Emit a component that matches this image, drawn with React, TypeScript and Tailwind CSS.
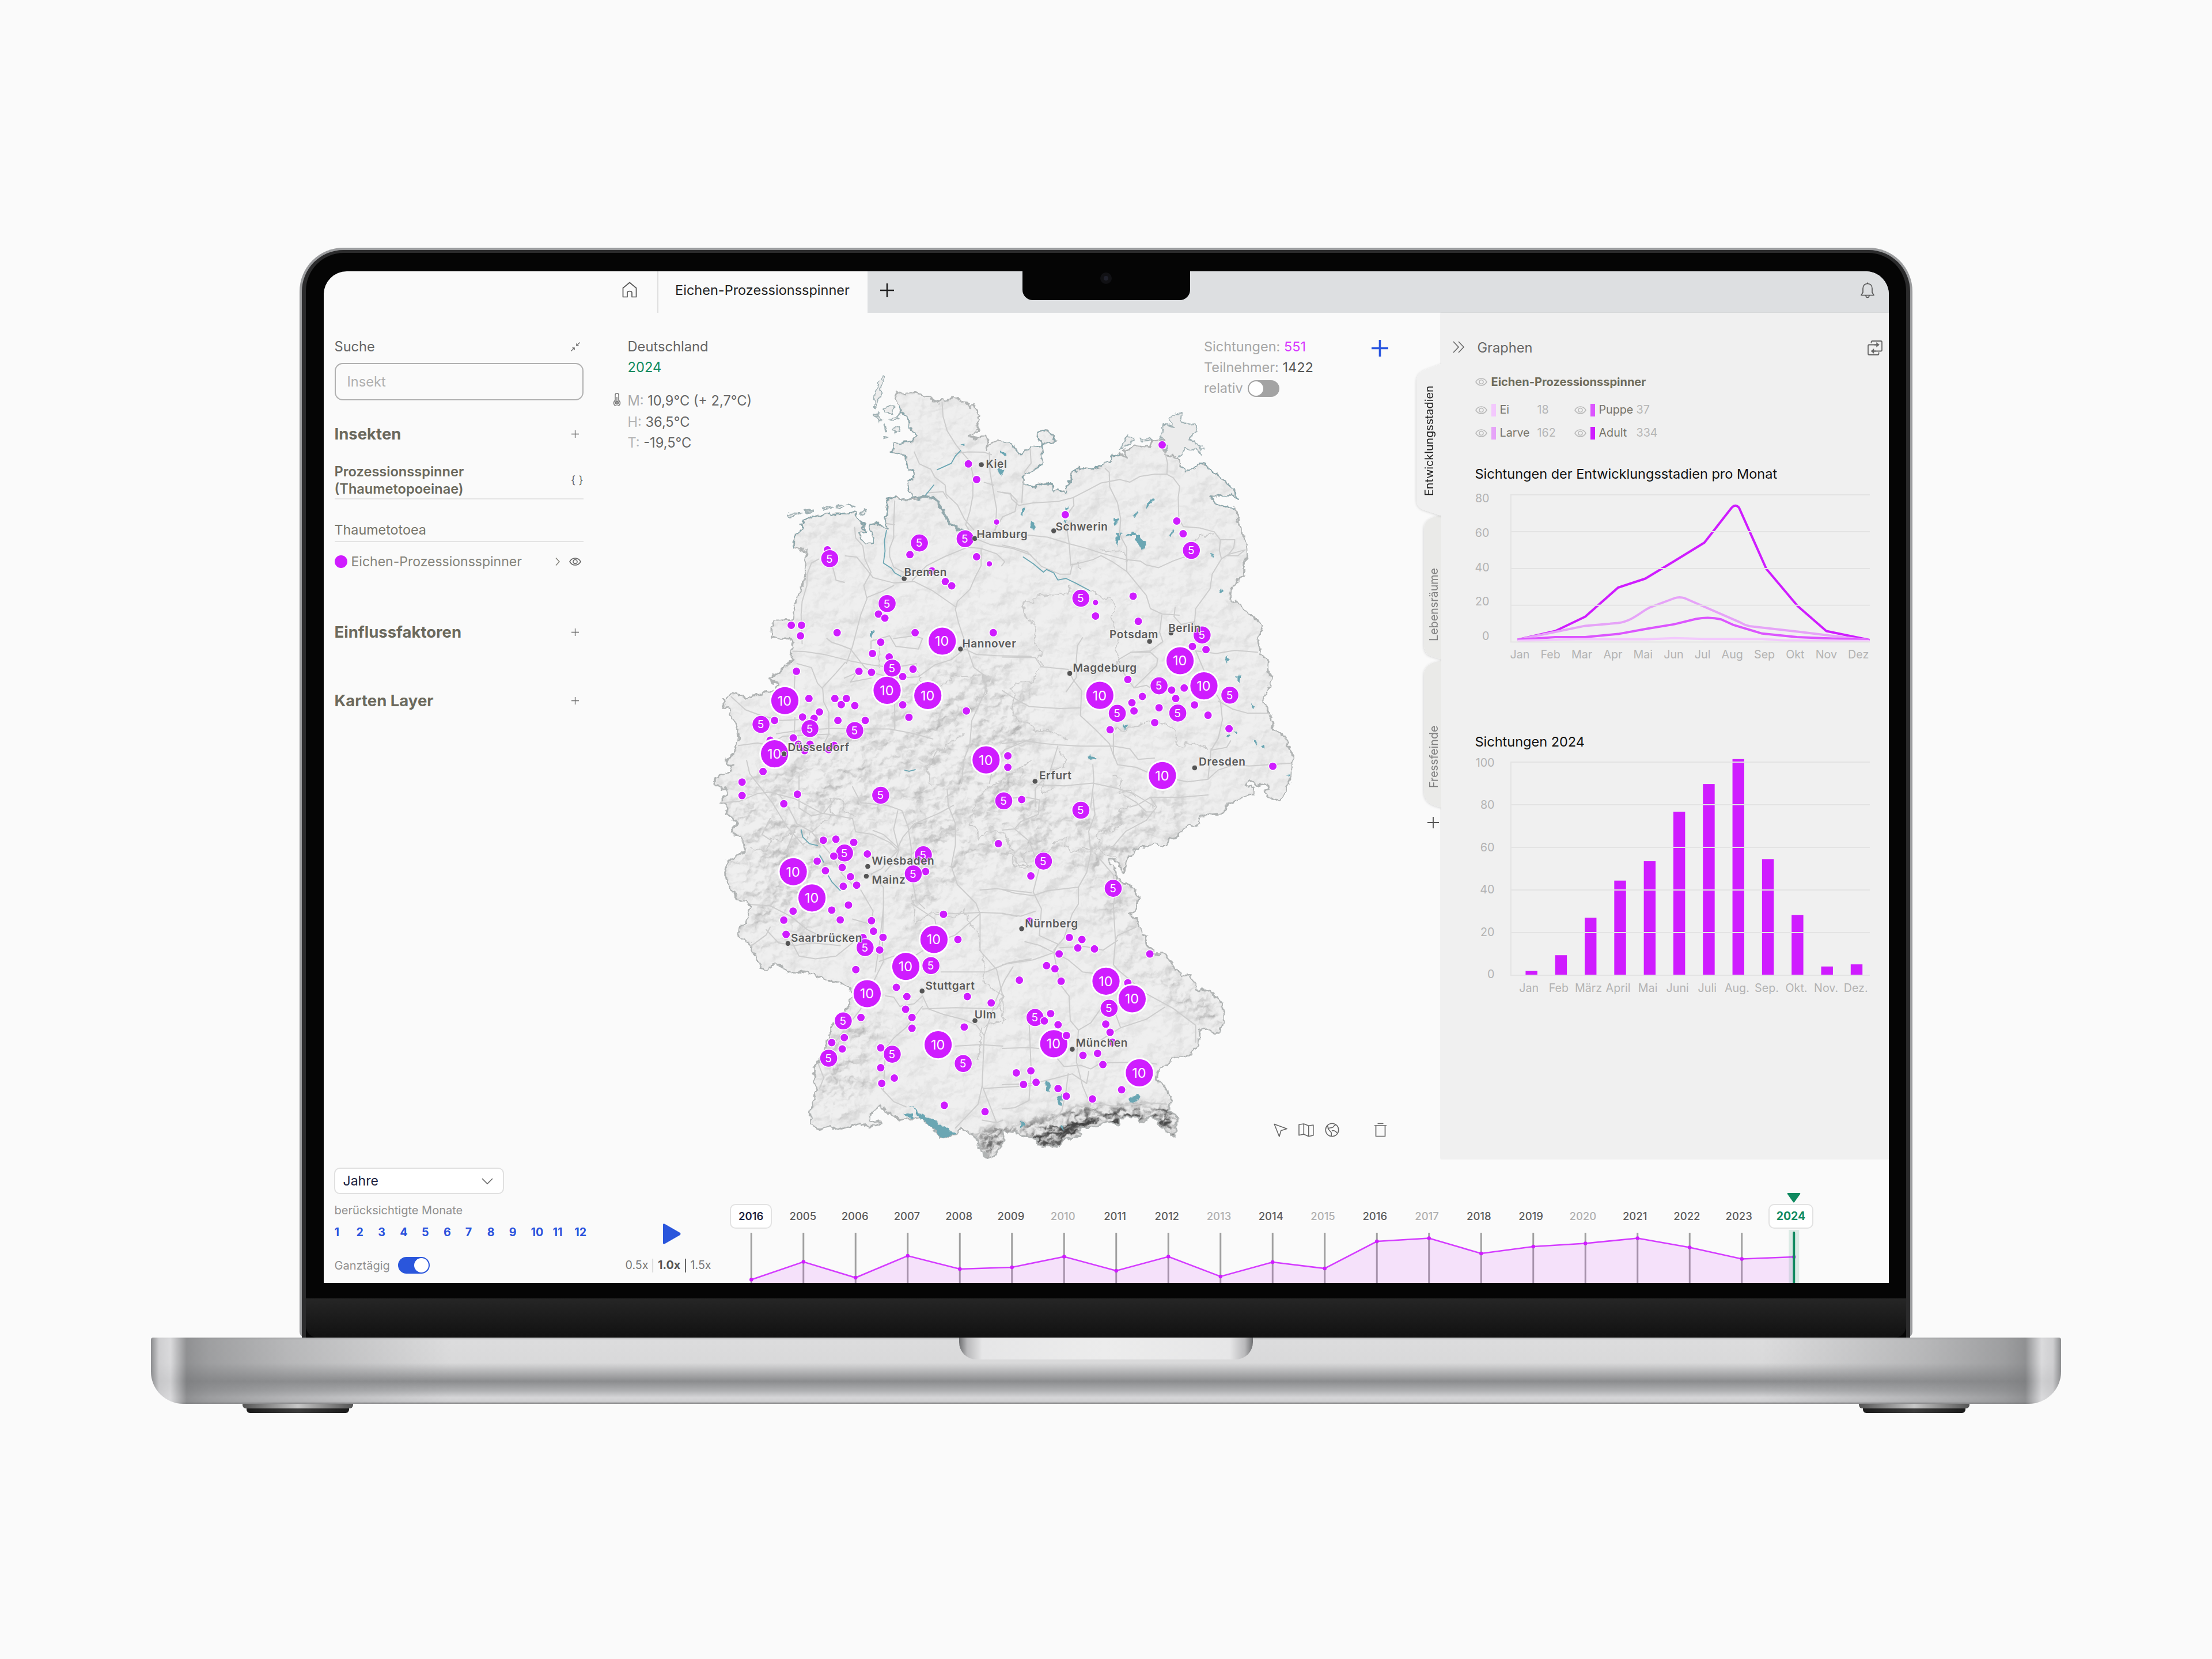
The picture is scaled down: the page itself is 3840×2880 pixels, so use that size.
import React from 'react';

type Sheet = 'A' | 'B' | 'C' | 'D';
type Pt = [number, number];

// The map is digitised on four sheets (NW, NE, SE, SW). Each has its own origin and unit size.
const SHEETS: Record<Sheet, { x: number; y: number; kx: number; ky: number }> = {
    A: { x: 1230, y: 640, kx: 0.35714, ky: 0.45918 },
    B: { x: 1740, y: 680, kx: 0.35714, ky: 0.45918 },
    C: { x: 1740, y: 1380, kx: 0.35714, ky: 0.42092 },
    D: { x: 1230, y: 1320, kx: 0.35714, ky: 0.45918 },
};

const at = (s: Sheet, x: number, y: number): Pt => {
    const t = SHEETS[s];
    return [Math.round((t.x + x * t.kx) * 10) / 10, Math.round((t.y + y * t.ky) * 10) / 10];
};

const pts = (s: Sheet, list: string): Pt[] =>
    list.trim().split(/\s+/).map((p) => {
        const [x, y] = p.split(',').map(Number);
        return at(s, x, y);
    });

const line = (s: Sheet, list: string) => 'M' + pts(s, list).map((p) => p.join(',')).join('L');
const area = (s: Sheet, list: string) => line(s, list) + 'Z';

const OUTLINE: [Sheet, string][] = [
    ['A', '905,95 915,86 950,92 1010,90 1060,104 1085,108 1088,124 1118,126 1135,114 1142,126 1170,118 1188,106 1225,120 1252,126 1272,146 1290,135 1318,178 1305,190 1315,235 1262,258 1300,262 1350,252 1362,262 1350,300 1372,284 1405,268'],
    ['B', '0,190 40,200 80,232 100,230 145,208 185,205 205,200 170,180 172,150 215,145 240,158 260,186 208,200 190,215 196,270 150,298 100,320 105,348 138,350 145,362 210,342 240,352 248,375 275,368 305,384 312,360 345,305 370,290 430,292 500,276 540,242 570,235 605,250 590,225 640,200 720,208 725,188 780,178 790,235 860,248 870,282 895,305 955,275 985,275 1000,290 1060,325 1125,370 1150,408 1125,395 1110,390 1010,400 1050,430 1135,438 1145,490 1180,560 1192,622 1175,640 1175,695 1112,740 1108,790 1150,800 1205,845 1265,885 1240,945 1255,995 1295,1015 1290,1060 1310,1075 1300,1110 1265,1170 1320,1250 1310,1275 1385,1310 1390,1345 1413,1375 1400,1460 1350,1550 1285,1530 1280,1515 1298,1500 1290,1485 1255,1490 1220,1478 1190,1475 1182,1490 1222,1495 1222,1520 1150,1540'],
    ['C', '1085,47 1072,75 1020,80 965,92 960,110 942,130 912,120 870,145 860,172 808,180 800,205 785,215 742,202 645,225 600,275 595,318 580,315 575,290 545,265 522,262 525,285 555,320 555,345 640,380 663,425 640,485 620,490 665,530 680,575 695,580 700,615 745,655 795,655 820,690 870,740 910,745 942,790 945,805 1010,805 1025,830 1048,838 1075,870 1080,940 1050,985 980,960 958,970 955,1030 910,1075 830,1090 770,1130 745,1170 790,1205 825,1260 805,1300 850,1325 855,1350 840,1370 840,1410 800,1390 755,1355 760,1340 720,1325 685,1350 640,1330 565,1330 570,1360 500,1350 440,1370 380,1370 375,1405 310,1420 265,1448 175,1448 165,1415 140,1410 75,1395 10,1385'],
    ['D', '1428,1400 1440,1440 1415,1465 1380,1500 1350,1505 1340,1480 1315,1468 1318,1440 1280,1410 1225,1390 1205,1415 1125,1425 1085,1385 1030,1350 975,1355 930,1360 880,1335 860,1330 840,1308 800,1325 778,1345 785,1365 840,1360 830,1375 800,1385 770,1385 740,1370 690,1385 650,1390 620,1395 590,1385 540,1395 500,1370 490,1340 510,1300 525,1235 510,1205 515,1165 545,1130 570,1080 600,1000 640,970 665,945 700,890 690,860 640,840 560,830 500,805 465,795 430,805 385,800 360,780 320,770 285,790 255,785 245,755 210,715 200,690 145,665 150,635 190,600 205,545 140,520 110,490 85,460 82,420 95,380 160,350 180,340 160,290 115,275 140,235 88,200 85,165 52,160 90,130 85,110 30,90'],
    ['A', '28,1546 90,1530 125,1500 95,1500 90,1485 130,1440 145,1400 140,1350 105,1305 110,1285 75,1280 68,1250 115,1225 140,1232 190,1245 240,1232 330,1215 335,1198 295,1170 350,1145 410,1100 400,1070 412,1035 395,1020 350,1022 305,1010 305,980 318,950 412,948 428,870 470,790 465,750 480,690 415,680 418,640 455,605 445,590 480,565 550,550 640,548 718,543 722,570 755,590 760,620 730,625 735,640 770,660 800,655 800,620 780,610 785,590 815,585 870,610 860,560 875,490 915,478 930,495 960,498 1010,490 975,465 965,425 1000,415 998,390 970,385 960,350 960,330 890,315 900,285 985,275 1015,255 1010,240 975,225 980,205 940,165 930,140'],
];
const GERMANY = 'M' + OUTLINE.flatMap(([s, l]) => pts(s, l)).map((p) => p.join(',')).join('L') + 'Z';

const ISLANDS = [
    area('A', '848,28 860,32 835,70 835,95 815,145 806,142 812,85 830,50'),
    area('A', '848,155 875,142 900,150 892,168 860,168'),
    area('A', '808,175 825,165 818,180 842,192 825,198'),
    area('A', '875,188 930,180 940,160 920,192 885,195'),
    area('A', '853,212 865,240 858,240'),
    area('A', '892,232 915,218 932,222 925,240 905,245'),
    area('A', '852,258 866,264 856,268'),
    area('A', '380,555 385,548 450,549 440,554 392,560'),
    area('A', '462,540 512,534 515,540 465,544'),
    area('A', '555,530 575,522 605,522 570,534'),
    area('A', '615,520 650,514 655,522 620,524'),
    area('A', '670,516 690,514 712,522'),
    area('A', '742,545 752,536 768,540 755,550'),
    area('B', '780,180 775,165 785,118 795,125 830,130 815,100 835,88 872,80 865,112 895,122 940,120 945,135 935,155 905,178 935,190 972,212 965,235 945,215 920,222 890,212 870,240 850,250 800,238 785,228 800,200'),
    area('B', '570,222 612,162 640,182 605,205'),
    area('B', '668,178 725,176 730,184 680,186'),
    area('B', '985,300 1000,292 1040,322 1062,345 1050,358 1020,340 990,332'),
];

const LAKES = [
    area('B', '640,545 665,540 702,572 680,598 650,572'),
    area('B', '595,540 645,530 652,540 600,545'),
    area('B', '550,540 575,532 572,560 560,582 550,560'),
    area('B', '700,430 722,405 736,408 712,436'),
    area('B', '635,472 650,455 662,458 645,475'),
    area('B', '810,545 835,520 838,526 822,550'),
    area('B', '545,478 565,476 552,505 542,500'),
    area('B', '1016,608 1028,610 1024,632 1016,625'),
    area('B', '1058,742 1078,755 1062,760'),
    area('B', '1092,998 1102,1012 1086,1032'),
    area('B', '1138,1075 1156,1075 1148,1098 1138,1094'),
    area('B', '1204,1178 1224,1188 1222,1200 1206,1190'),
    area('B', '585,1260 608,1266 604,1275 588,1272'),
    area('B', '424,1374 458,1382 456,1390 428,1386'),
    area('B', '1086,1298 1112,1296 1108,1303 1088,1308'),
    area('B', '1125,1280 1146,1288 1138,1298'),
    area('B', '1216,1315 1242,1326 1234,1333'),
    area('B', '1250,1342 1272,1338 1266,1350'),
    area('B', '1380,1446 1396,1444 1386,1456'),
    area('B', '92,440 104,438 104,468 94,462'),
    area('B', '132,490 156,494 152,524 142,512'),
    area('B', '302,440 326,432 318,444'),
    area('B', '295,492 320,486 314,500'),
    area('B', '0,228 24,234 18,240 0,240'),
    area('A', '1400,385 1435,378 1425,405 1410,392'),
    area('A', '1416,315 1452,318 1445,328 1420,324'),
    area('A', '1225,286 1246,284 1238,292'),
    area('A', '788,998 806,998 796,1016'),
    area('D', '978,1303 1040,1340 1095,1358 1140,1385 1207,1414 1125,1426 1085,1385 1030,1352'),
    area('D', '950,1332 980,1336 1008,1352 965,1348'),
    area('D', '1518,1366 1534,1378 1518,1392'),
    area('C', '215,1178 224,1180 235,1215 225,1232 212,1222'),
    area('C', '270,1245 290,1232 290,1280 276,1280'),
    area('C', '613,1248 635,1248 655,1230 674,1250 645,1268 622,1272'),
    area('C', '92,1348 106,1360 90,1376'),
    area('C', '278,1370 292,1362 306,1378'),
];

const RIVERS = [
    line('A', '1112,382 1180,358 1200,330 1225,310'),
    line('A', '1055,478 1095,440'),
    line('A', '865,612 855,650 858,690 850,735 890,755 905,772 935,785'),
    line('B', '102,625 150,650 200,682 215,672 250,685 270,712 310,706 360,725 425,752'),
    line('D', '450,262 458,290 490,315 530,322'),
    line('D', '540,358 560,385'),
    line('D', '582,436 600,460 625,480 640,492'),
    line('A', '953,1518 975,1522 1005,1516'),
];

const ESTUARY = line('A', '930,495 960,498 1010,487 1060,484 1095,488 1120,515 1150,550 1175,585 1205,605 1235,612');

const ROADS = [
    line('A', '1135,126 1140,180 1160,235 1200,285 1230,315 1270,350 1285,400 1285,480 1270,540 1250,590 1290,640'),
    line('A', '1200,320 1260,315 1340,316 1375,325'),
    line('A', '1000,315 1025,360 1080,380 1100,410 1150,440 1155,475 1210,515 1245,570 1290,610'),
    line('A', '1365,316 1368,390 1385,465 1400,530 1395,610 1310,640'),
    line('A', '1340,430 1385,440'),
    line('A', '1405,465 1470,475 1500,500 1490,540 1430,560 1390,610'),
    line('A', '1060,470 1140,465 1160,490'),
    line('A', '990,800 1060,745 1150,710 1260,675 1330,680'),
    line('A', '1325,680 1325,745 1295,790 1270,835 1210,880 1200,910 1215,960 1245,1030 1290,1130 1350,1165'),
    line('A', '1325,680 1400,700 1440,730 1425,745'),
    line('A', '1290,640 1370,665 1480,680 1568,705'),
    line('A', '665,708 720,712 770,760 800,790 900,810 1000,805 1090,840 1200,900'),
    line('A', '710,600 715,640 750,670 760,720 790,770 755,820 770,870 740,930 700,1050 670,1115'),
    line('A', '535,720 500,735 480,775 478,820 455,880 450,930 455,1040'),
    line('A', '905,500 900,590 900,640 880,680 880,710 900,750 950,770'),
    line('A', '590,710 610,770 620,800 660,808'),
    line('A', '860,585 905,590'),
    line('A', '770,865 850,840 900,820'),
    line('A', '410,1068 470,1070 560,1080 690,1105 790,1120 900,1130 1010,1115'),
    line('A', '690,1060 730,1100 760,1130 800,1150 900,1170 1020,1165 1100,1120 1180,1100 1245,1060'),
    line('A', '1245,1060 1300,1080 1400,1085 1568,1088'),
    line('A', '575,1020 600,1035 640,1045 690,1060'),
    line('A', '660,1170 720,1150 690,1185 790,1170'),
    line('A', '430,1115 500,1130 530,1190 555,1210 560,1260 585,1300 585,1380 560,1420'),
    line('A', '555,1205 620,1150 665,1110'),
    line('A', '900,1020 1000,1010 1040,1020 1020,1060 910,1050 880,1010 790,1030 790,1080'),
    line('A', '110,1240 180,1290 250,1310 350,1330 480,1325'),
    line('A', '330,1380 420,1370 500,1365 600,1360 700,1362 880,1362 1000,1380 1090,1400'),
    line('A', '300,1420 360,1390 480,1385 590,1382'),
    line('A', '905,1150 905,1362'),
    line('A', '420,1320 415,1410 380,1440'),
    line('A', '145,1425 240,1415 330,1430'),
    line('A', '1350,1165 1345,1220 1280,1330 1270,1420 1240,1480 1230,1568'),
    line('A', '420,1160 415,1230'),
    line('A', '1365,1568 1385,1500 1440,1440 1568,1400'),
    line('B', '135,210 140,270 110,300 100,350 95,420'),
    line('B', '0,380 40,385 45,405 80,430 150,420 270,415 345,400 420,370 480,345 570,332 620,342 670,320 740,312 800,312 830,325 862,358 855,400 858,480 880,510 960,515 1030,530'),
    line('B', '500,290 520,305 522,360 560,420 575,480 570,540 605,590 605,680 700,770 720,820 775,840 860,845'),
    line('B', '790,225 803,270 800,312'),
    line('B', '0,580 60,590 120,605 190,660 280,690 330,690 340,655 440,635 480,620 540,645 605,680'),
    line('B', '0,540 100,540 220,550 325,575 400,590 480,610 600,635 670,640 700,655 760,665 830,640 920,615'),
    line('B', '310,500 325,575 332,650'),
    line('B', '345,400 348,430 310,470'),
    line('B', '1030,530 1060,560 1055,600 1065,632 1020,690 1010,745 940,820 935,870'),
    line('B', '1065,632 1100,615 1180,598'),
    line('B', '1060,560 1130,560 1125,590 1095,620 1145,620 1180,598'),
    line('B', '840,815 835,850 870,880 930,870 940,900'),
    line('B', '775,845 765,910 780,945 720,980 625,985 570,1010 555,1030'),
    line('B', '625,985 720,985 755,1010 750,1035 700,1075 640,1120'),
    line('B', '0,1003 160,1005 190,1040 320,1050 345,1090 385,1130 380,1225 450,1275 520,1330 545,1385'),
    line('B', '555,1020 600,1075 640,1120 700,1110 740,1130'),
    line('B', '940,980 1040,990 1130,978 1240,985'),
    line('B', '940,980 1000,1090 1060,1170 1070,1240 1050,1310 1015,1355'),
    line('B', '0,1130 60,1160 130,1190 280,1198 380,1195'),
    line('B', '1050,1170 1120,1200 1190,1215 1310,1215'),
    line('B', '360,1010 360,1080 310,1135'),
    line('B', '360,1010 365,960 390,930'),
    line('B', '0,1330 110,1320 200,1330 270,1335 380,1340 540,1340 620,1350 660,1390 740,1385'),
    line('B', '540,1290 540,1370 560,1410 650,1420 740,1450 900,1475 1000,1465 1015,1350'),
    line('B', '270,1340 230,1440 160,1500 160,1568'),
    line('B', '1000,1465 1050,1430 1130,1410 1200,1415 1400,1405'),
    line('B', '1015,1355 1090,1345 1110,1320'),
    line('B', '140,1485 300,1490 440,1480 560,1500 640,1520 740,1568'),
    line('B', '440,1410 445,1470 430,1568'),
    line('D', '185,0 200,50 250,100 310,160 380,250 460,320'),
    line('D', '60,160 150,155 240,125 300,120 345,130 420,145 550,200 700,220 715,270'),
    line('D', '345,130 390,180 430,240 500,270 600,360 650,430 700,470'),
    line('D', '440,60 440,180 500,210'),
    line('D', '700,100 740,160 870,170 940,190 970,250 985,330 985,430 1010,530 1050,560'),
    line('D', '500,210 560,200 610,150'),
    line('D', '800,265 850,280 920,330 945,290 1000,240 1120,200 1190,170'),
    line('D', '715,270 800,280 880,310 920,340 840,410 790,430 850,480 850,560 830,700 810,800'),
    line('D', '920,190 900,260 925,340 905,380 860,420'),
    line('D', '740,490 770,530 800,570 790,620 700,600'),
    line('D', '300,220 260,280 300,300'),
    line('D', '420,260 380,340 420,400'),
    line('D', '205,545 300,550 400,590 480,640 560,670 680,660 750,680'),
    line('D', '400,680 440,740 520,750 620,740 700,690'),
    line('D', '280,640 340,690 420,700 500,690 640,700'),
    line('D', '210,700 280,660 300,630'),
    line('D', '850,560 845,700 850,760 800,840 760,880 740,940 680,1000 600,1080'),
    line('D', '830,760 900,740 1000,740 1100,690 1200,660 1320,580'),
    line('D', '1110,575 1200,580 1320,575 1430,578 1500,590'),
    line('D', '985,540 1100,600 1110,640'),
    line('D', '1160,110 1165,170 1200,240 1200,320 1180,400 1210,470 1300,540 1320,580 1320,720 1400,790 1430,890'),
    line('D', '1320,490 1400,485 1568,500'),
    line('D', '860,890 900,895 930,930 1000,920 1040,890'),
    line('D', '1040,890 1070,940 1140,960 1240,980 1300,1000 1340,1040 1330,1230 1310,1300 1200,1390'),
    line('D', '860,1090 900,1050 960,1010 1000,970 1040,930'),
    line('D', '840,1240 900,1290 960,1310'),
    line('D', '860,1100 850,1250'),
    line('D', '1040,940 1200,935 1400,940 1430,900'),
    line('D', '1130,800 1350,800 1460,765 1568,750'),
    line('D', '1330,1230 1400,1370'),
    line('D', '1340,1240 1568,1230'),
    line('D', '1200,1080 1320,1075 1430,1080'),
    line('D', '1340,1040 1400,900 1440,830 1480,780'),
    line('D', '530,1140 560,1200 540,1240'),
    line('D', '1330,1360 1400,1370 1430,1360'),
    line('C', '0,145 60,140 130,190 180,300 150,400 190,470 180,580'),
    line('C', '0,390 60,405 150,415 220,395 370,380'),
    line('C', '0,15 120,10 180,20 175,80 90,110 60,140'),
    line('C', '440,0 450,80 420,150 430,240 410,320 370,380 370,450 340,490 300,590 250,640'),
    line('C', '480,235 540,210 600,150 700,105 750,50 720,10'),
    line('C', '450,240 540,330 550,400 540,460 550,600 540,700'),
    line('C', '620,50 660,40 720,10 860,10 1000,0'),
    line('C', '590,0 650,30 700,70 740,70'),
    line('C', '110,605 180,620 250,650 320,680 390,730 440,735'),
    line('C', '180,580 270,615 250,650 150,680 70,690 0,700'),
    line('C', '250,650 280,780 325,830 330,930 370,970 360,1100 390,1200 430,1280'),
    line('C', '280,630 400,625 490,640 560,600'),
    line('C', '540,700 560,720 700,820 830,880 940,950 940,1020'),
    line('C', '370,970 430,940 480,880'),
    line('C', '575,960 700,925 790,875'),
    line('C', '540,880 575,960 480,1010'),
    line('C', '0,1045 130,1042 230,1050 300,1120 380,1115 430,1130 480,1105 700,1102 750,1110'),
    line('C', '0,1195 150,1190 250,1170 340,1150 410,1190 420,1140'),
    line('C', '320,1150 310,1220 290,1300 240,1360'),
    line('C', '130,930 140,1130 130,1260 60,1290 0,1295'),
    line('C', '430,1270 560,1285 700,1270 800,1275'),
    line('C', '550,600 560,580 650,545'),
    line('C', '0,490 90,500 160,480'),
    line('C', '0,120 20,115'),
];

const STATES = [
    line('B', '330,730 320,765 170,770 150,795 102,800 110,845 160,885 155,950 195,985 165,1010 200,1035 160,1060 160,1098 70,1102 45,1120 65,1150 45,1200 75,1240 140,1260 155,1280 240,1280 320,1320'),
    line('B', '330,655 360,650 380,672'),
    line('B', '430,752 480,775 530,785 550,810 530,850 545,890 560,930 555,990 570,1020'),
    line('B', '480,595 500,605 560,600 600,610 605,640'),
    line('B', '520,1270 600,1280 640,1265 710,1245 780,1250 830,1270 850,1335 880,1345 890,1325 940,1335 1000,1350'),
    line('B', '270,1350 310,1390 290,1420 240,1430 200,1470 190,1520 250,1500'),
    line('B', '540,1450 580,1470 570,1520 620,1510 650,1530'),
    line('B', '920,570 960,545 1030,535'),
    line('C', '0,240 50,250 60,300 90,290 130,290 90,255 110,235 150,230'),
    line('C', '250,200 280,185 310,180 310,210 340,235 400,220 470,225'),
    line('C', '620,50 570,55 580,120 540,150 490,135 455,170 475,190 460,215 500,245 550,255'),
    line('C', '0,825 5,880 0,940'),
    line('D', '205,335 290,340 300,295 350,305 420,270'),
    line('D', '460,320 500,270 600,210 590,140 650,150 660,190 710,210'),
    line('D', '1568,0 1420,80 1340,110 1290,190 1270,240 1310,260 1310,300 1350,270 1430,270 1480,340 1510,410 1568,400'),
    line('D', '990,500 1000,620 1080,575 1140,590 1200,600 1240,560 1270,620 1310,650 1320,700 1340,770 1330,830 1430,890 1410,930 1440,985 1390,990 1330,1010 1310,1130'),
    line('D', '560,1150 620,1080 650,1050'),
    line('A', '790,1030 830,1020 830,1130'),
    line('A', '1010,1115 1040,1200 1110,1210 1200,1160 1340,1160 1350,1230 1300,1250'),
    line('A', '1535,880 1530,910 1568,965'),
    line('A', '1080,1568 1060,1500 1110,1450 1180,1410 1240,1380'),
];

const SMALL: [Sheet, string][] = [
    ['A', '1263,360 1303,419 1303,711 979,703 1086,765 1151,805 1182,821 578,685 826,928 857,943 402,970 452,970 447,1010 625,998 1004,998 837,1034 797,1077 878,1090 427,1144 731,1144 792,1148 994,1136 944,1164 1384,998 488,1247 614,1247 645,1270 670,1247 711,1274 539,1298 457,1317 513,1322 629,1330 762,1330 321,1330 944,1271 974,1318 1253,1294 300,1405 412,1396 437,1420 493,1420 467,1444 584,1440 610,1424 265,1523 1455,1464 1455,1507'],
    ['B', '777,201 306,465 848,489 879,537 453,848 636,773 661,868 924,963 990,975 610,1088 681,1152 630,1176 640,1207 524,1278 823,1128 884,1120 843,1160 762,1195 741,1251 934,1184 1000,1223 1102,1274 1315,1416'],
    ['D', '163,82 163,133 432,128 366,164 558,302 619,298 706,310 772,354 528,381 568,417 650,405 690,440 720,472 655,476 680,547 599,566 640,603 411,570 366,604 377,658 792,606 802,646 848,669 832,717 751,670 716,791 1142,582 1212,677 1055,420 913,858 964,893 958,941 989,972 989,1013 741,972 660,1048 599,1067 650,1091 837,1087 837,1162 903,1201 842,1221 1258,893 1374,917 1243,1008 1146,1304 1344,1328 1409,315'],
    ['C', '94,19 139,334 133,520 326,588 387,596 367,631 448,635 276,656 215,704 256,717 286,768 83,764 717,656 610,775 235,902 271,948 503,945 524,979 535,1020 392,1074 463,1066 489,1112 68,1146 139,1138 103,1194 164,1185 271,1211 311,1242 438,1254 580,1216'],
];
const TINY: [Sheet, string][] = [['A', '1400,580 1365,738'], ['B', '453,797']];
const FIVES: [Sheet, string][] = [
    ['A', '589,718 1025,659 1247,643 868,888 255,1345 493,1361 711,1368'],
    ['B', '919,600 382,781 971,920 762,1112 559,1216 853,1215 1106,1147'],
    ['D', '837,132 1435,153 661,350 1044,357 995,429 761,708 1081,776 655,985 584,1126 893,1111 1238,1146'],
    ['C', '382,63 200,273 539,385 519,880 159,918'],
];
const TENS: [Sheet, string][] = [
    ['A', '1136,1030 868,1216 1066,1236 371,1255 321,1456 1349,1479'],
    ['B', '864,1017 980,1112 474,1148 778,1451'],
    ['D', '412,421 503,520 1096,677 959,779 771,882 1116,1075'],
    ['C', '504,768 631,841 250,1026 666,1146'],
];
// single sightings that sit above a cluster
const SMALL_TOP: [Sheet, string][] = [['D', '609,362'], ['C', '204,932 312,992']];
const FIVES_TOP: [Sheet, string][] = [['A', '893,1132']];

const CITIES: [string, Sheet, number, number, number, number][] = [
    ['Kiel', 'A', 1326, 363, 1348, 375],
    ['Hamburg', 'A', 1294, 642, 1303, 640],
    ['Bremen', 'A', 951, 794, 951, 784],
    ['Hannover', 'A', 1225, 1060, 1233, 1055],
    ['Düsseldorf', 'A', 367, 1456, 385, 1447],
    ['Schwerin', 'B', 250, 526, 259, 524],
    ['Potsdam', 'B', 716, 944, 521, 931],
    ['Berlin', 'B', 820, 912, 807, 907],
    ['Magdeburg', 'B', 328, 1065, 343, 1058],
    ['Dresden', 'B', 935, 1422, 955, 1413],
    ['Erfurt', 'B', 159, 1473, 179, 1465],
    ['Wiesbaden', 'D', 774, 401, 793, 395],
    ['Mainz', 'D', 767, 438, 794, 466],
    ['Saarbrücken', 'D', 386, 692, 400, 685],
    ['Stuttgart', 'D', 1038, 872, 1054, 867],
    ['Ulm', 'D', 1295, 984, 1293, 975],
    ['Nürnberg', 'C', 94, 552, 110, 546],
    ['München', 'C', 340, 1049, 357, 1039],
];

const all = (list: [Sheet, string][]) => list.flatMap(([s, l]) => pts(s, l));

const Cluster = ({ p, big }: { p: Pt; big?: boolean }) => (
    <g>
        <circle cx={p[0]} cy={p[1]} r={big ? 26.5 : 16.2} fill="#fff" />
        <circle cx={p[0]} cy={p[1]} r={big ? 23.6 : 14.8} fill="#cf1cff" />
        <text x={p[0] - 0.5} y={p[1] + (big ? 8.4 : 6.8)} textAnchor="middle" fill="#fff" fontSize={big ? 23.5 : 19}>
            {big ? '10' : '5'}
        </text>
    </g>
);

const Dot = ({ p, r = 7.2 }: { p: Pt; r?: number }) => (
    <circle cx={p[0]} cy={p[1]} r={r} fill="#cf1cff" stroke="#fff" strokeWidth={1.4} />
);

const GermanyMap = () => (
    <svg className="absolute inset-0 h-full w-full" viewBox="1040 543 1462 1469">
        <defs>
            <clipPath id="land">
                <path d={GERMANY} />
            </clipPath>
            <filter id="relief" x="0" y="0" width="100%" height="100%" colorInterpolationFilters="sRGB">
                <feTurbulence type="fractalNoise" baseFrequency="0.02 0.025" numOctaves={5} seed={11} />
                <feDiffuseLighting surfaceScale={11} lightingColor="#fff" diffuseConstant={1}>
                    <feDistantLight azimuth={225} elevation={58} />
                </feDiffuseLighting>
                <feColorMatrix values="0 0 0 0 0.4  0 0 0 0 0.4  0 0 0 0 0.4  -1.4 0 0 0 1.24" />
                <feGaussianBlur stdDeviation={0.8} />
            </filter>
            <filter id="alps" x="0" y="0" width="100%" height="100%" colorInterpolationFilters="sRGB">
                <feTurbulence type="fractalNoise" baseFrequency="0.035 0.055" numOctaves={4} seed={7} />
                <feDiffuseLighting surfaceScale={20} lightingColor="#fff" diffuseConstant={1}>
                    <feDistantLight azimuth={235} elevation={55} />
                </feDiffuseLighting>
                <feColorMatrix values="0 0 0 0 0.25  0 0 0 0 0.25  0 0 0 0 0.25  -1.3 0 0 0 1.16" />
                <feGaussianBlur stdDeviation={0.9} />
            </filter>
            {/* roughens coast and border lines */}
            <filter id="rough" filterUnits="userSpaceOnUse" x="1040" y="543" width="1462" height="1469">
                <feTurbulence type="fractalNoise" baseFrequency="0.09" numOctaves={3} seed={4} result="n" />
                <feDisplacementMap in="SourceGraphic" in2="n" scale={11} xChannelSelector="R" yChannelSelector="G" />
            </filter>
            <filter id="soft" x="-20%" y="-20%" width="140%" height="140%">
                <feGaussianBlur stdDeviation={26} />
            </filter>
            <filter id="soft-s" x="-20%" y="-20%" width="140%" height="140%">
                <feGaussianBlur stdDeviation={9} />
            </filter>
            <mask id="heights" maskUnits="userSpaceOnUse" x="1040" y="543" width="1462" height="1469">
                <rect x="1040" y="543" width="1462" height="1469" fill="#2e2e2e" />
                <g fill="#8a8a8a" filter="url(#soft)">
                    <path d={area('A', '380,1568 420,1430 700,1380 900,1330 1000,1180 1250,1100 1568,1180 1568,1568')} />
                    <path d={area('D', '60,120 500,0 1568,0 1568,260 1200,480 1000,520 900,150 600,430 450,700 150,640 90,420')} />
                    <path d={area('D', '640,940 800,900 860,1000 800,1200 700,1300 520,1360 560,1180')} />
                    <path d={area('C', '0,0 900,0 860,160 600,260 640,480 700,650 1060,860 1040,960 700,740 520,520 380,300 0,260')} />
                    <path d={area('D', '900,540 1080,520 1100,620 920,660')} />
                </g>
                <g fill="#fff" filter="url(#soft-s)">
                    <path d={area('D', '600,1180 700,1080 720,1180 640,1340 540,1340')} opacity={0.6} />
                    <path d={area('C', '720,720 940,800 1060,900 1040,960 840,860')} opacity={0.6} />
                    <path d={area('B', '0,1140 90,1180 100,1290 0,1280')} opacity={0.5} />
                </g>
            </mask>
            <mask id="alpine" maskUnits="userSpaceOnUse" x="1040" y="543" width="1462" height="1469">
                <g fill="#fff" filter="url(#soft-s)">
                    <path d={area('C', '100,1365 200,1340 350,1300 500,1290 800,1280 880,1330 860,1440 700,1380 380,1420 200,1480 60,1420')} />
                    <path d={area('D', '1300,1410 1420,1385 1568,1395 1568,1430 1460,1450 1360,1530')} opacity={0.8} />
                </g>
            </mask>
        </defs>

        <g filter="url(#rough)">
            <g stroke="#9fb0b3" strokeWidth={2} fill="#ececec" strokeLinejoin="round">
                {ISLANDS.map((d) => <path key={d} d={d} />)}
            </g>
            <path d={GERMANY} fill="#efefef" />
            <g clipPath="url(#land)">
                <rect x="1040" y="543" width="1462" height="1469" filter="url(#relief)" mask="url(#heights)" />
                <rect x="1040" y="543" width="1462" height="1469" filter="url(#alps)" mask="url(#alpine)" />
                <g fill="none" strokeLinejoin="round" strokeLinecap="round">
                    <g stroke="#cacaca" strokeWidth={1.7}>{STATES.map((d) => <path key={d} d={d} />)}</g>
                </g>
            </g>
            <path d={ESTUARY} fill="none" stroke="#93a9ad" strokeWidth={5} strokeLinejoin="round" strokeLinecap="round" />
            <path d={GERMANY} fill="none" stroke="#b0b3b3" strokeWidth={2.7} strokeLinejoin="round" />
            <g fill="none" stroke="#84a5ab" strokeWidth={1.6} strokeLinejoin="round">
                <path d={line('A', '415,680 418,640 455,605 445,590 480,565 550,550 640,548 718,543 722,570 755,590 760,620 730,625 735,640 770,660 800,655 800,620 780,610 785,590 815,585 870,610 860,560 875,490 915,478')} />
                <path d={line('A', '1010,490 975,465 965,425 1000,415 998,390 970,385 960,350 960,330 890,315 900,285 985,275 1015,255 1010,240 975,225 980,205 940,165 930,140')} />
                <path d={line('B', '0,190 40,200 80,232 100,230 145,208 185,205 205,200 170,180 172,150 215,145 240,158 260,186 208,200 190,215 196,270 150,298 100,320 105,348 138,350 145,362 210,342 240,352 248,375 275,368 305,384 312,360 345,305 370,290 430,292 500,276 540,242 570,235')} />
                <path d={line('B', '870,282 895,305 955,275 985,275 1000,290 1060,325 1125,370 1150,408 1125,395 1110,390 1010,400 1050,430 1135,438')} />
            </g>
            <g fill="#6ba6b3">{LAKES.map((d) => <path key={d} d={d} />)}</g>
        </g>
        <g clipPath="url(#land)">
            <g fill="none" strokeLinejoin="round" strokeLinecap="round">
                <g stroke="#cdcdcd" strokeWidth={2}>{ROADS.map((d) => <path key={d} d={d} />)}</g>
                <g stroke="#6ba6b3" strokeWidth={1.8}>{RIVERS.map((d) => <path key={d} d={d} />)}</g>
            </g>
        </g>

        {all(SMALL).map((p) => <Dot key={p.join()} p={p} />)}
        {all(TINY).map((p) => <Dot key={p.join()} p={p} r={5.4} />)}
        {all(FIVES).map((p) => <Cluster key={p.join()} p={p} />)}
        {all(TENS).map((p) => <Cluster key={p.join()} p={p} big />)}
        {all(FIVES_TOP).map((p) => <Cluster key={p.join()} p={p} />)}
        {all(SMALL_TOP).map((p) => <Dot key={p.join()} p={p} />)}

        {CITIES.map(([name, s, cx, cy, tx, ty]) => {
            const c = at(s, cx, cy);
            const t = at(s, tx, ty);
            return (
                <g key={name}>
                    <circle cx={c[0]} cy={c[1]} r={4.8} fill="#555" stroke="#f2f2f2" strokeWidth={1} />
                    <text
                        x={t[0]}
                        y={t[1]}
                        fontSize={19}
                        fontWeight={600}
                        letterSpacing={0.6}
                        fill="#5a5a5a"
                        stroke="#f4f4f4"
                        strokeWidth={2.4}
                        strokeOpacity={0.8}
                        paintOrder="stroke"
                    >
                        {name}
                    </text>
                </g>
            );
        })}
    </svg>
);

const Eye = ({ className }: { className: string }) => (
    <svg className={className} viewBox="0 0 24 16" fill="none" stroke="currentColor" strokeWidth={1.8}>
        <path d="M1.2 8C3.6 3.6 7.4 1.2 12 1.2S20.4 3.6 22.8 8C20.4 12.4 16.6 14.8 12 14.8S3.6 12.4 1.2 8Z" />
        <circle cx="12" cy="8" r="4" />
    </svg>
);

const Plus = ({ className, w = 1.6 }: { className: string; w?: number }) => (
    <svg className={className} viewBox="0 0 16 16" fill="none" stroke="currentColor" strokeWidth={w}>
        <path d="M8 0V16M0 8H16" />
    </svg>
);

const Sidebar = () => (
    <aside className="flex w-[478px] shrink-0 flex-col pt-[44px] pr-[27px] pl-[19px] text-[23px] text-[#666]">
        <div className="flex h-[30px] items-center justify-between pr-[6px]">
            <span className="text-[23.6px]">Suche</span>
            <svg className="h-[16px] w-[16px]" viewBox="0 0 17 17" fill="none" stroke="currentColor" strokeWidth={1.4}>
                <path d="M16.500 .5L10.500 6.500M10.500 2.500V6.500H14.500M.5 16.500L6.500 10.500M6.500 14.500V10.500H2.500" />
            </svg>
        </div>
        <div className="mt-[13px] flex h-[65px] items-center rounded-[14px] border-2 border-[#b0b0b0] px-[20px] pt-[1px] text-[23.6px] text-[#b0b0b0]">Insekt</div>
        <div className="mt-[38px] flex h-[41px] items-center justify-between pr-[8px]">
            <span className="text-[27.5px] font-bold text-[#6b695d]">Insekten</span>
            <Plus className="h-[13px] w-[13px]" />
        </div>
        <div className="mt-[30px] flex h-[63px] items-center justify-between border-b-2 border-[#e4e4e4] pb-[2px] text-[23.6px] leading-[29.4px] font-semibold text-[#6b695d]">
            <span>Prozessionsspinner<br />(Thaumetopoeinae)</span>
            <span className="text-[19px] font-normal text-[#666]">{'{ }'}</span>
        </div>
        <div className="mt-[38px] flex h-[36px] items-start border-b-2 border-[#e4e4e4] text-[23.3px] leading-[30px] text-[#77756a]">Thaumetotoea</div>
        <div className="mt-[19px] flex h-[30px] items-center text-[#85847c]">
            <span className="h-[22px] w-[22px] rounded-full bg-[#cf1cff]" />
            <span className="ml-[7px]">Eichen-Prozessionsspinner</span>
            <svg className="ml-auto h-[14px] w-[8px]" viewBox="0 0 8 14" fill="none" stroke="currentColor" strokeWidth={1.6}>
                <path d="M1 .5L7 7L1 13.500" />
            </svg>
            <Eye className="mr-[4px] ml-[16px] h-[14px] w-[21px] text-[#666]" />
        </div>
        <div className="mt-[87px] flex h-[41px] items-center justify-between pr-[8px]">
            <span className="text-[27.5px] font-bold text-[#6b695d]">Einflussfaktoren</span>
            <Plus className="h-[13px] w-[13px]" />
        </div>
        <div className="mt-[78px] flex h-[41px] items-center justify-between pr-[8px]">
            <span className="text-[27.5px] font-bold text-[#6b695d]">Karten Layer</span>
            <Plus className="h-[13px] w-[13px]" />
        </div>
    </aside>
);

const MapArea = () => (
    <section className="relative flex w-[1462px] shrink-0 flex-col justify-between">
        <GermanyMap />
        <div className="relative flex pt-[41px] pl-[24px] text-[23.7px] leading-[36.2px] text-[#666]">
            <div className="flex">
                <svg className="mt-[98px] h-[23px] w-[14px]" viewBox="0 0 14 23" fill="none" stroke="#777" strokeWidth={1.5}>
                    <path d="M4 13V3.800A3 3 0 0 1 10 3.800V13A5.500 5.500 0 1 1 4 13Z" />
                    <circle cx="7" cy="17" r="2.600" fill="#999" />
                    <path d="M7 7V15" />
                </svg>
                <div className="ml-[12px]">
                    <p>Deutschland</p>
                    <p className="text-[#108a60]">2024</p>
                    <p className="mt-[22px] text-[23.6px]"><span className="text-[#aaa]">M:</span> 10,9°C (+ 2,7°C)</p>
                    <p className="text-[23.6px]"><span className="text-[#b4b4b4]">H:</span> 36,5°C</p>
                    <p className="text-[23.6px]"><span className="text-[#b4b4b4]">T:</span> -19,5°C</p>
                </div>
            </div>
            <div className="absolute top-[41px] left-[1050.5px] text-[23.5px] text-[#a6a6a6]">
                <p>Sichtungen: <span className="text-[#d633ff]">551</span></p>
                <p>Teilnehmer: <span className="text-[#555]">1422</span></p>
                <p className="flex items-center">
                    relativ
                    <span className="ml-[8px] flex h-[29px] w-[55px] items-center rounded-full bg-[#a3a3a3] p-[2px]">
                        <span className="h-[25px] w-[25px] rounded-full bg-white" />
                    </span>
                </p>
            </div>
            <Plus className="absolute top-[47px] left-[1341px] h-[29px] w-[29px] text-[#2a56e0]" w={2} />
        </div>
        <div className="relative flex items-center pb-[38px] pl-[1171px] text-[#666]">
            <svg className="h-[24px] w-[24px]" viewBox="0 0 24 24" fill="none" stroke="currentColor" strokeWidth={1.6} strokeLinejoin="round">
                <path d="M1.200 1.500L23 9.500L12.800 12.800L9.800 23Z" />
            </svg>
            <svg className="ml-[19px] h-[24px] w-[27px]" viewBox="0 0 27 24" fill="none" stroke="currentColor" strokeWidth={1.6} strokeLinejoin="round">
                <path d="M1 2.300L9.300 1L17.800 4.300L25.800 3V21L17.800 22.800L9.300 19L1 20.800ZM9.300 1V19M17.800 4.300V22.800" />
            </svg>
            <svg className="ml-[19px] h-[25px] w-[25px]" viewBox="0 0 25 25" fill="none" stroke="currentColor" strokeWidth={1.6}>
                <circle cx="12.500" cy="12.500" r="11.300" />
                <path d="M19 3.500C15.500 4 16 7.500 12.500 8.500C9 9.500 7 8.500 5.500 10.500L10.500 16.500C12.500 18 10.500 20 11.500 23.500M4.500 5L6 10.500M12 14.500C14 12.500 18.500 14 21.500 18" />
            </svg>
            <svg className="ml-[60px] h-[25px] w-[23px]" viewBox="0 0 23 25" fill="none" stroke="currentColor" strokeWidth={1.7}>
                <path d="M1 5H22M6.500 1.500H16.500M3.500 5V23.500H19.500V5" />
            </svg>
        </div>
    </section>
);

const STAGES = [
    { name: 'Ei', count: 18, bar: 'bg-[#f3c8fd]' },
    { name: 'Puppe', count: 37, bar: 'bg-[#dc55ff]' },
    { name: 'Larve', count: 162, bar: 'bg-[#e6a3f8]' },
    { name: 'Adult', count: 334, bar: 'bg-[#cf1cff]' },
];

const MONTHS = ['Jan', 'Feb', 'Mar', 'Apr', 'Mai', 'Jun', 'Jul', 'Aug', 'Sep', 'Okt', 'Nov', 'Dez'];
const MONTHS_DE = ['Jan', 'Feb', 'März', 'April', 'Mai', 'Juni', 'Juli', 'Aug.', 'Sep.', 'Okt.', 'Nov.', 'Dez.'];
const SIGHTINGS = [2, 9.4, 27, 44.4, 53.5, 76.7, 89.7, 101.4, 54.5, 28.3, 4.1, 5.1];

const StageChart = () => (
    <div className="flex">
        <div className="flex w-[25px] flex-col text-right">
            {[80, 60, 40, 20, 0].map((v) => <span key={v} className="h-[59.8px] leading-[20px]">{v}</span>)}
        </div>
        <div className="ml-[36px] pt-[2px]">
            <svg className="block h-[262px] w-[626px]" viewBox="0 -2 626 262" fill="none" strokeWidth={4} strokeLinejoin="round">
                <path stroke="#cf1cff" d="M12.600 251.500L77.900 236.500L130 211.500L187 161L234.200 145.500L284.700 115L336.800 83L384 22.500Q391 15 397 22.500L444.300 128.500L498.600 193L548.500 236.500L623.600 252" />
                <path stroke="#e6a3f8" d="M12.600 251.500L78 238L130 227.400L187 222.600C212 219 225 204 242.400 195.300L284.700 179.500Q293.500 176.500 302.800 179.500L398.800 221.400Q406 226 415 228L503 238L607 250.700L623 252" />
                <path stroke="#dc55ff" d="M12.600 251.500L78 247H130L187 241.600L237 232.500L284.700 224.600L322 215.500Q345 211 366 216.300L388 226.200L437 240.800L497.500 247.100L590.700 250.700L623.600 252" />
                <path stroke="#f3c8fd" d="M12.600 253.500L113.500 250.700H237L284.700 248.700L338 250.300H437L475.600 252.700L623.600 253.800" />
                <path stroke="#e3e3e3" strokeWidth={2} d="M.8 0V255.500M0 0H624M0 64.100H624M0 128.100H624M0 191.800H624M0 255.500H624" />
            </svg>
            <div className="mt-[4px] flex w-[623px] justify-between leading-[26px]">
                {MONTHS.map((m) => <span key={m}>{m}</span>)}
            </div>
        </div>
    </div>
);

const MonthChart = () => (
    <div className="flex">
        <div className="flex w-[34px] flex-col text-right">
            {[100, 80, 60, 40, 20, 0].map((v) => <span key={v} className="h-[73.4px] leading-[26px]">{v}</span>)}
        </div>
        <div className="ml-[27px]">
            <svg className="mt-[2px] block h-[384px] w-[626px]" viewBox="0 -10 626 384">
                {SIGHTINGS.map((v, i) => (
                    <rect key={i} x={26.4 + i * 51.31} y={370 - v * 3.7} width={20.4} height={v * 3.7} fill="#cf1cff" />
                ))}
                <path stroke="#e3e3e3" strokeWidth={2} fill="none" d="M.8 0V370M0 0H624M0 74H624M0 148H624M0 222H624M0 296H624M0 370H624" />
            </svg>
            <div className="mt-[5px] ml-[7px] grid w-[619px] grid-cols-12 text-center leading-[26px]">
                {MONTHS_DE.map((m) => <span key={m} className="-mx-[4px]">{m}</span>)}
            </div>
        </div>
    </div>
);

const VerticalTabs = () => (
    <div className="absolute top-[86px] -left-[46px]">
        <svg className="absolute top-0 left-0 h-[800px] w-[48px] overflow-visible" viewBox="0 0 48 800">
            <defs>
                <filter id="tab" x="-30%" y="-10%" width="140%" height="120%">
                    <feDropShadow dx={-0.5} dy={1} stdDeviation={2} floodOpacity={0.16} />
                </filter>
                <clipPath id="tabclip"><rect x="-20" y="-20" width="66" height="840" /></clipPath>
            </defs>
            <g clipPath="url(#tabclip)">
                <path d="M48 518Q16 521 16 543V745Q16 768 48 773Z" fill="#eaeae8" filter="url(#tab)" />
                <path d="M48 266Q16 268 16 290V490Q16 506 28 510L48 516Z" fill="#eaeae8" filter="url(#tab)" />
                <path d="M48 2L18 13Q3 19 3 34V238Q3 251 15 256L48 267Z" fill="#f0f0f0" filter="url(#tab)" />
            </g>
        </svg>
        <div className="relative flex h-[815px] flex-col text-[19.7px] leading-[26px] text-[#808080]">
            <span className="mt-[38px] ml-[12px] h-[194px] rotate-180 [writing-mode:vertical-rl] text-[#222]">Entwicklungsstadien</span>
            <span className="mt-[125px] ml-[20px] h-[127px] rotate-180 [writing-mode:vertical-rl]">Lebensräume</span>
            <span className="mt-[147px] ml-[20px] h-[108px] rotate-180 [writing-mode:vertical-rl]">Fressfeinde</span>
            <Plus className="mt-[50px] ml-[22px] h-[20px] w-[20px] shrink-0 text-[#555]" w={1.5} />
        </div>
    </div>
);

const GraphPanel = () => (
    <section className="relative w-[777px] shrink-0 bg-[#f0f0f0] pt-[46px] shadow-[-1px_0_2px_rgba(0,0,0,0.1)]">
        <VerticalTabs />
        <div className="flex h-[30px] items-center pr-[11px] pl-[20px] text-[23.6px] text-[#666]">
            <svg className="-mt-[3px] h-[21px] w-[20px]" viewBox="0 0 20 21" fill="none" stroke="currentColor" strokeWidth={1.6}>
                <path d="M1 1L10 10.500L1 20M10 1L19 10.500L10 20" />
            </svg>
            <span className="ml-[23px]">Graphen</span>
            <svg className="ml-auto h-[26px] w-[26px]" viewBox="0 0 26 26" fill="none" stroke="currentColor" strokeWidth={1.8}>
                <path d="M6.500 5V3Q6.500 1 8.500 1H23Q25 1 25 3V16.500Q25 18.500 23 18.500H12M19.500 20.500V23Q19.500 25 17.500 25H3Q1 25 1 23V9.500Q1 7.500 3 7.500H15.500" />
                <path d="M15.500 11.500L20.500 7.500L15.500 3.500V11.500ZM11 14.500L6 18.500L11 22.500V14.500Z" fill="currentColor" strokeWidth={0.5} />
                <path d="M12 7.500H19M7 18.500H14" />
            </svg>
        </div>
        <div className="pl-[59px] text-[19.7px]">
            <div className="mt-[30px] flex h-[28px] items-center text-[20px] font-bold text-[#6e6c5c]">
                <Eye className="h-[14px] w-[21px] text-[#b9b9b9]" />
                <span className="ml-[7px]">Eichen-Prozessionsspinner</span>
            </div>
            <div className="mt-[15px] grid w-[344px] grid-cols-2 text-[#77756a]">
                {STAGES.map((s) => (
                    <div key={s.name} className="flex h-[40px] items-center">
                        <Eye className="h-[14px] w-[21px] shrink-0 text-[#b9b9b9]" />
                        <span className={`ml-[7px] h-[22px] w-[8px] shrink-0 ${s.bar}`} />
                        <span className="ml-[7px] w-[65px] shrink-0">{s.name}</span>
                        <span className="text-[#b5b5b5]">{s.count}</span>
                    </div>
                ))}
            </div>
            <h3 className="mt-[36px] text-[23.5px] leading-[30px] text-[#111]">Sichtungen der Entwicklungsstadien pro Monat</h3>
            <div className="mt-[17px] text-[#b3b3b3]">
                <StageChart />
            </div>
            <h3 className="mt-[119px] text-[23.5px] leading-[30px] text-[#111]">Sichtungen 2024</h3>
            <div className="mt-[8px] text-[#b3b3b3]">
                <MonthChart />
            </div>
        </div>
    </section>
);

// y of every point in the timeline, measured from the bottom edge of the year labels
const TIMELINE: { year: number; y: number; dim?: boolean }[] = [
    { year: 2016, y: 88.5 }, { year: 2005, y: 57.5 }, { year: 2006, y: 85 }, { year: 2007, y: 47 },
    { year: 2008, y: 70 }, { year: 2009, y: 67 }, { year: 2010, y: 48.5, dim: true }, { year: 2011, y: 73 },
    { year: 2012, y: 48.5 }, { year: 2013, y: 83, dim: true }, { year: 2014, y: 58 }, { year: 2015, y: 69, dim: true },
    { year: 2016, y: 22 }, { year: 2017, y: 16.5, dim: true }, { year: 2018, y: 43 }, { year: 2019, y: 31 },
    { year: 2020, y: 25.5, dim: true }, { year: 2021, y: 16.5 }, { year: 2022, y: 32.5 }, { year: 2023, y: 52.5 },
    { year: 2024, y: 49 },
];
const STEP = 90.5;
const tick = (i: number) => STEP / 2 + i * STEP;

const yearStyle = (i: number, dim?: boolean) => {
    if (i === 0) return 'border-2 border-[#e2e2e2] bg-white px-[12.5px] text-[18.5px] font-semibold text-[#1c2240]';
    if (i === TIMELINE.length - 1) return 'border-2 border-[#e2e2e2] bg-white px-[12px] text-[19.5px] font-bold text-[#108a60]';
    return dim ? 'text-[18.5px] font-medium text-[#b0b0b0]' : 'text-[18.5px] font-medium text-[#5c5c5c]';
};

const Timeline = () => {
    const track = TIMELINE.map((t, i) => `${tick(i)},${t.y}`).join(' L');
    const last = tick(TIMELINE.length - 1);
    return (
        <div className="relative -ml-[9px] w-[1901px] shrink-0">
            <div className="flex pt-[78px]">
                {TIMELINE.map((t, i) => (
                    <div key={i} className="flex w-[90.28px] flex-col items-center">
                        <span className={`flex h-[43px] items-center rounded-[10px] ${yearStyle(i, t.dim)}`}>{t.year}</span>
                    </div>
                ))}
            </div>
            <svg className="absolute top-[59px] right-[34px] h-[17px] w-[24px]" viewBox="0 0 24 17">
                <path d="M1.500 0H22.500Q24 .5 23 2L13 16Q12 17 11 16L1 2Q0 .5 1.500 0Z" fill="#108a60" />
            </svg>
            <svg className="block h-[94px] w-[1901px]" viewBox="0 0 1901 94">
                <g stroke="#a0a0a0" strokeWidth={3}>
                    {TIMELINE.slice(0, -1).map((t, i) => <path key={i} d={`M${tick(i)} 7V96`} />)}
                </g>
                <path d={`M${tick(0)},96 L${track} L${last},96Z`} fill="#d633ff" fillOpacity={0.12} />
                <path d={`M${track}`} fill="none" stroke="#d43cff" strokeWidth={2.6} />
                {TIMELINE.map((t, i) => <circle key={i} cx={tick(i)} cy={t.y} r={3.2} fill="#cf1cff" />)}
                <rect x={last - 9} y={2} width={18} height={100} fill="#108a60" fillOpacity={0.13} />
                <path d={`M${last} 7V98`} stroke="#108a60" strokeWidth={4} strokeLinecap="round" />
            </svg>
        </div>
    );
};

const Footer = () => (
    <footer className="flex h-[215px] overflow-hidden">
        <div className="flex w-[478px] shrink-0 flex-col pt-[15px] pl-[18px] text-[19.7px] text-[#8f8f8f]">
            <div className="flex h-[46px] w-[295px] items-center justify-between rounded-[10px] border-2 border-[#e0e0e0] bg-white pt-[1px] pr-[17px] pl-[14px] text-[23px] text-[#1c2240]">
                Jahre
                <svg className="h-[11px] w-[20px]" viewBox="0 0 20 11" fill="none" stroke="#666" strokeWidth={1.6}>
                    <path d="M1 1L10 10L19 1" />
                </svg>
            </div>
            <div className="mt-[16px] ml-[1px] h-[24px] text-[20px] leading-[24px]">berücksichtigte Monate</div>
            <div className="mt-[14px] ml-[1px] flex h-[24px] leading-[24px] font-bold text-[#2a52dd]">
                {Array.from({ length: 12 }, (_, i) => <span key={i} className="w-[37.9px] shrink-0">{i + 1}</span>)}
            </div>
            <div className="mt-[31px] ml-[1px] flex h-[29px] items-center text-[20px]">
                Ganztägig
                <span className="ml-[14px] flex h-[29px] w-[55px] items-center justify-end rounded-full bg-[#2a56dc] p-[2px]">
                    <span className="h-[25px] w-[25px] rounded-full bg-white" />
                </span>
            </div>
        </div>
        <div className="w-[228px] shrink-0 pt-[112px]">
            <svg className="ml-[111px] h-[36px] w-[31px]" viewBox="0 0 31 36"><path d="M0 2Q0 -.5 3 .8L29.500 16Q31.500 18 29.500 20L3 35.200Q0 36.500 0 34Z" fill="#2a56dc" /></svg>
            <div className="mt-[24px] ml-[46px] flex h-[26px] items-center text-[19.7px] whitespace-nowrap text-[#777]">
                <span className="w-[39px]">0.5x</span>
                <span className="ml-[8px] h-[24px] w-[1.5px] bg-[#666]" />
                <span className="ml-[8px] w-[40px] font-bold text-[#555]">1.0x</span>
                <span className="ml-[7px] h-[24px] w-[1.5px] bg-[#666]" />
                <span className="ml-[8px]">1.5x</span>
            </div>
        </div>
        <Timeline />
    </footer>
);

const TabBar = () => (
    <header className="flex h-[72px] text-[23.5px] text-[#1f1f1f]">
        <div className="flex w-[581px] justify-end border-r-2 border-[#dedede] pt-[18px] pr-[35px]">
            <svg className="h-[28px] w-[26px]" viewBox="0 0 26 28" fill="none" stroke="#555" strokeWidth={1.7} strokeLinejoin="round">
                <path d="M1.500 11L13 1.500L24.500 11V26.500H17V19Q17 16.500 13 16.500T9 19V26.500H1.500Z" />
            </svg>
        </div>
        <div className="flex w-[363px] items-center justify-center pr-[1px] pb-[6px]">Eichen-Prozessionsspinner</div>
        <div className="flex flex-1 items-center justify-between bg-[#dddfe1] pr-[25px] pb-[7px] pl-[22px]">
            <Plus className="h-[24px] w-[24px]" w={1.7} />
            <svg className="h-[28px] w-[24px]" viewBox="0 0 24 28" fill="none" stroke="#555" strokeWidth={1.7} strokeLinejoin="round">
                <path d="M12 2.500C6.500 2.500 4 6.500 4 11V17.500L1 22.500H23L20 17.500V11C20 6.500 17.500 2.500 12 2.500ZM12 .5V2.500M9 23Q9.500 26.500 12 26.500T15 23" />
            </svg>
        </div>
    </header>
);

const Screen = () => (
    <div className="relative h-[1756px] w-[2717px] overflow-hidden rounded-t-[40px] bg-[#fafafa]">
        <TabBar />
        <div className="flex h-[1469px]">
            <Sidebar />
            <MapArea />
            <GraphPanel />
        </div>
        <Footer />
        {/* camera notch */}
        <div className="absolute -top-[4px] left-[1213px] flex h-[54px] w-[291px] justify-center rounded-b-[18px] bg-[#050505]">
            <div className="mt-[6px] flex h-[20px] w-[20px] items-center justify-center rounded-full bg-[#111114]">
                <div className="h-[8px] w-[8px] rounded-full bg-[#20212b]" />
            </div>
        </div>
    </div>
);

const Foot = () => (
    <div className="flex w-[192px] flex-col items-center">
        <div className="h-[8px] w-[192px] rounded-b-[6px] bg-linear-to-r from-[#555] via-[#c8c8c8] to-[#555]" />
        <div className="h-[8px] w-[178px] rounded-b-[6px] bg-linear-to-r from-[#1a1a1a] via-[#3b3b3b] to-[#1a1a1a]" />
    </div>
);

const App = () => (
    <div className="flex h-[2880px] w-[3840px] flex-col items-center overflow-hidden bg-[#fafafa] pt-[430px] font-['Inter',sans-serif]">
        {/* Lid */}
        <div className="h-[1892px] w-[2800px] rounded-t-[76px] rounded-b-[10px] bg-[#9b9c9e] px-[4px] pt-[4px]">
            <div className="h-full rounded-t-[72px] bg-[#2b2b2c] px-[7px] pt-[5px]">
                <div className="flex h-full flex-col items-center overflow-hidden rounded-t-[66px] bg-[#050505] pt-[32px]">
                    <Screen />
                    <div className="mt-[27px] w-full flex-1 rounded-b-[20px] bg-linear-to-b from-[#262626] to-[#111]" />
                </div>
            </div>
        </div>
        {/* Base */}
        <div className="flex h-[115px] w-[3316px] justify-center overflow-hidden rounded-t-[4px] rounded-b-[56px] bg-[linear-gradient(90deg,#8b8c8e_0px,rgba(205,205,207,0.9)_14px,rgba(218,218,220,0.85)_34px,rgba(125,126,128,0.8)_62px,rgba(132,133,135,0.7)_100px,rgba(140,141,143,0.45)_240px,rgba(140,141,143,0)_520px,rgba(140,141,143,0)_2796px,rgba(140,141,143,0.45)_3076px,rgba(132,133,135,0.7)_3216px,rgba(125,126,128,0.8)_3254px,rgba(218,218,220,0.85)_3282px,rgba(205,205,207,0.9)_3302px,#8b8c8e_3316px),linear-gradient(180deg,#b9babc_0px,#dcdcdd_4px,#d9d9da_44px,#8b8c8e_76px,#aeafb1_92px,#d6d6d8_104px,#cfcfd1_111px,#858587_115px)]">
            <div className="h-[38px] w-[510px] rounded-b-[30px] bg-[linear-gradient(90deg,#6f7072_0px,#b9b9bb_14px,#e6e6e7_40px,#ececec_255px,#e6e6e7_470px,#b9b9bb_496px,#6f7072_510px)]" />
        </div>
        <div className="flex w-[2998px] justify-between">
            <Foot />
            <Foot />
        </div>
    </div>
);

export default App;
